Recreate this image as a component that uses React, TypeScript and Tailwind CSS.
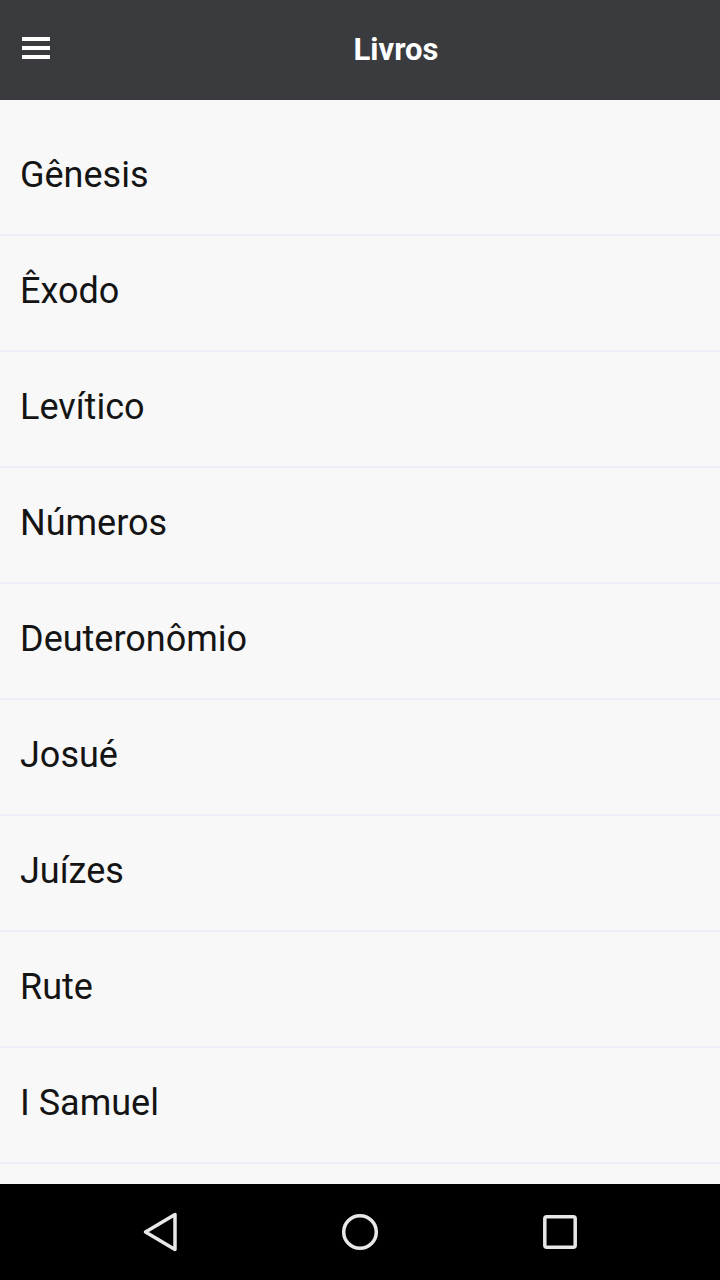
import React from "react";

const BOOKS = [
  "Gênesis",
  "Êxodo",
  "Levítico",
  "Números",
  "Deuteronômio",
  "Josué",
  "Juízes",
  "Rute",
  "I Samuel",
];

function NavBar() {
  return (
    <div className="grid h-[96px] shrink-0 grid-cols-3 place-items-center bg-black px-[60px]">
      <svg width="40" height="40" viewBox="0 0 40 40" className="text-[#e8e8e8]">
        <path
          d="M35 2.5 L35 37.5 L5.5 20 Z"
          fill="none"
          stroke="currentColor"
          strokeWidth="3.5"
          strokeLinejoin="round"
        />
      </svg>
      <svg width="40" height="40" viewBox="0 0 40 40" className="text-[#e8e8e8]">
        <circle cx="20" cy="20" r="16.3" fill="none" stroke="currentColor" strokeWidth="3.5" />
      </svg>
      <svg width="40" height="40" viewBox="0 0 40 40" className="text-[#e8e8e8]">
        <rect x="4.8" y="4.8" width="30.4" height="30.4" rx="2" fill="none" stroke="currentColor" strokeWidth="3.5" />
      </svg>
    </div>
  );
}

export default function App() {
  return (
    <div
      className="flex h-[1280px] w-[720px] flex-col overflow-hidden bg-[#f8f8f8]"
      style={{ fontFamily: "Roboto, 'Liberation Sans', sans-serif" }}
    >
      {/* toolbar */}
      <header className="relative flex h-[100px] shrink-0 items-center bg-[#3a3b3f] pl-[72px]">
        <button type="button" aria-label="Menu" className="absolute left-[22px] top-[37px] flex w-[28px] flex-col gap-[5px]">
          <span className="block h-[4px] w-full bg-white" />
          <span className="block h-[4px] w-full bg-white" />
          <span className="block h-[4px] w-full bg-white" />
        </button>
        <h1 className="flex-1 text-center text-[31px] font-bold text-white">Livros</h1>
      </header>

      {/* book list (next row is scrolled out of view below the fold) */}
      <ul className="min-h-0 flex-1 overflow-hidden pt-[20px]">
        {BOOKS.map((b) => (
          <li
            key={b}
            className="flex h-[116px] items-center border-b-2 border-[#eeeefa] pb-[4px] pl-[20px] text-[36px] text-[#141414]"
          >
            {b}
          </li>
        ))}
      </ul>

      <NavBar />
    </div>
  );
}
